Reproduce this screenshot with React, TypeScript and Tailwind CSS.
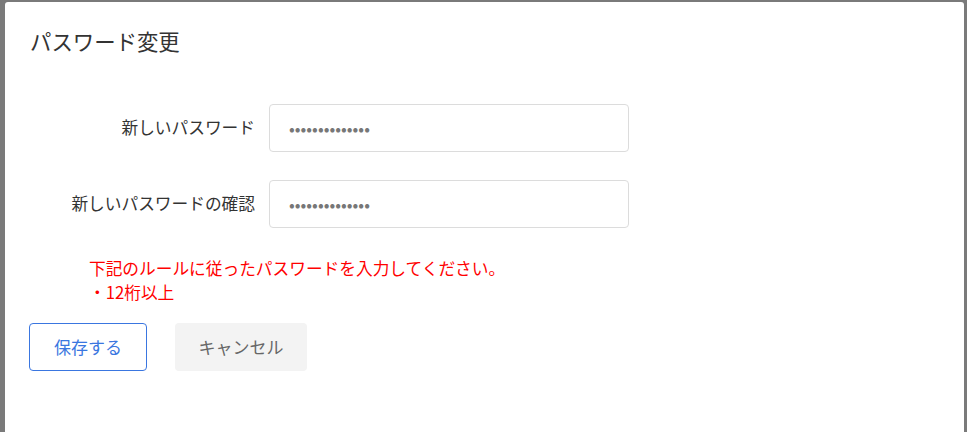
export default function App() {
  const font = { fontFamily: '"Noto Sans CJK JP", "Noto Sans", sans-serif' };
  return (
    <div
      className="w-full h-[432px] overflow-hidden bg-[#7a7a7a] pl-[5px] pr-[3px] pt-[2px]"
      style={font}
    >
      <div className="h-full bg-white rounded-t-[3px] pt-[24px]">
        {/* Title */}
        <h2 className="pl-[25px] text-[21.4px] leading-[30px] text-[#333333]">パスワード変更</h2>

        {/* Fields */}
        <div className="mt-[48px] flex flex-col gap-[28px]">
          <div className="flex items-center gap-[14px]">
            <label className="w-[250px] text-right text-[16.7px] text-[#333333]">新しいパスワード</label>
            <div className="w-[360px] h-[48px] border border-[#dcdcdc] rounded-[4px] flex items-center pl-[19px]">
              <input
                type="password"
                readOnly
                value="aaaaaaaaaaaaaa"
                className="w-full outline-none text-[17px] text-[#777777] bg-transparent"
              />
            </div>
          </div>
          <div className="flex items-center gap-[14px]">
            <label className="w-[250px] text-right text-[16.7px] text-[#333333]">新しいパスワードの確認</label>
            <div className="w-[360px] h-[48px] border border-[#dcdcdc] rounded-[4px] flex items-center pl-[19px]">
              <input
                type="password"
                readOnly
                value="aaaaaaaaaaaaaa"
                className="w-full outline-none text-[17px] text-[#777777] bg-transparent"
              />
            </div>
          </div>
        </div>

        {/* Rules */}
        <div className="mt-[28px] pl-[84px] text-[16.7px] leading-[24px] text-[#ff0000]">
          <p>下記のルールに従ったパスワードを入力してください。</p>
          <p>・12桁以上</p>
        </div>

        {/* Buttons */}
        <div className="mt-[19px] pl-[24px] flex gap-[28px]">
          <button className="w-[118px] h-[48px] border border-[#3a76e0] rounded-[4px] text-[17px] text-[#3a76e0] bg-white">
            保存する
          </button>
          <button className="w-[132px] h-[48px] rounded-[4px] bg-[#f3f3f3] text-[17px] text-[#666666]">
            キャンセル
          </button>
        </div>
      </div>
    </div>
  );
}
